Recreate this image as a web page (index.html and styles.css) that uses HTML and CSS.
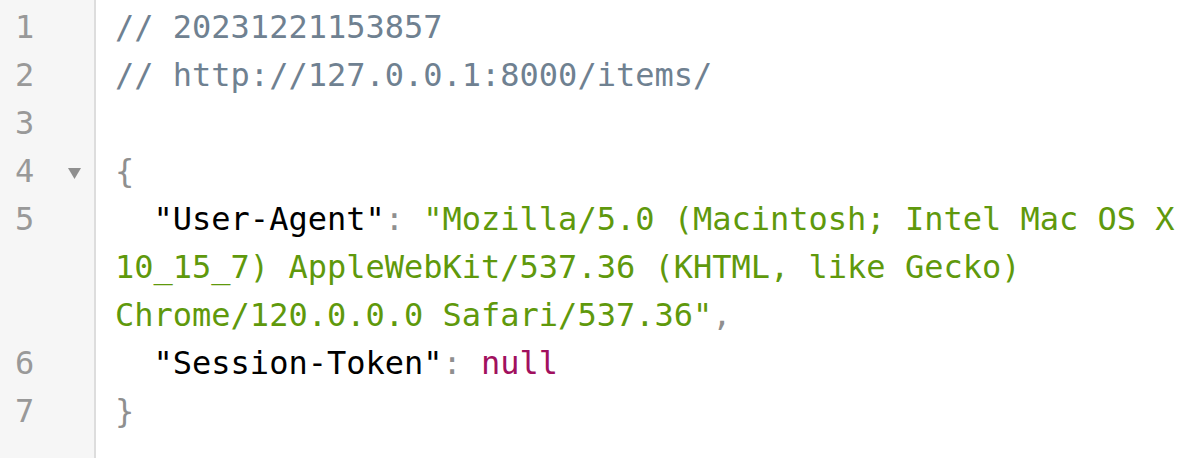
FILE: index.html
```html
<!DOCTYPE html>
<html>
<head>
<meta charset="utf-8">
<link rel="stylesheet" href="styles.css">
</head>
<body>
<div class="editor">
  <div class="num">1</div><div class="code"><span class="cm">// 20231221153857</span></div>
  <div class="num">2</div><div class="code"><span class="cm">// http://127.0.0.1:8000/items/</span></div>
  <div class="num">3</div><div class="code"> </div>
  <div class="num"><span>4</span><svg class="fold" width="13" height="11" viewBox="0 0 13 11"><polygon points="0,0 13,0 6.5,11" fill="#8f8f8f"/></svg></div><div class="code"><span class="p">{</span></div>
  <div class="num">5</div><div class="code">  <span class="key">"User-Agent"</span><span class="p">:</span> <span class="str">"Mozilla/5.0 (Macintosh; Intel Mac OS X 10_15_7) AppleWebKit/537.36 (KHTML, like Gecko) Chrome/120.0.0.0 Safari/537.36"</span><span class="p">,</span></div>
  <div class="num">6</div><div class="code">  <span class="key">"Session-Token"</span><span class="p">:</span> <span class="nul">null</span></div>
  <div class="num">7</div><div class="code"><span class="p">}</span></div>
  <div class="num fill"></div><div class="code"></div>
</div>
</body>
</html>
```

FILE: styles.css
```css
html, body {
  margin: 0;
  padding: 0;
  background: #ffffff;
}
.editor {
  display: grid;
  grid-template-columns: 96px 1fr;
  grid-template-rows: repeat(7, auto) 1fr;
  height: 100vh;
  font-family: "DejaVu Sans Mono", monospace;
  font-size: 32px;
  line-height: 48px;
  color: #000;
}
.num {
  background: #f6f6f6;
  border-right: 2px solid #dddddd;
  color: #999999;
  padding-left: 15px;
  padding-right: 13px;
  display: flex;
  align-items: flex-start;
  justify-content: space-between;
}
.num:first-child, .num:first-child + .code {
  padding-top: 3px;
}
.fold {
  margin-top: 21px;
}
.code {
  padding-left: 19px;
  white-space: pre-wrap;
  word-break: normal;
  overflow-wrap: break-word;
}
.cm { color: #6f8191; }
.p { color: #8f8f8f; }
.key { color: #000000; }
.str { color: #5f990c; }
.nul { color: #a1105e; }
```
